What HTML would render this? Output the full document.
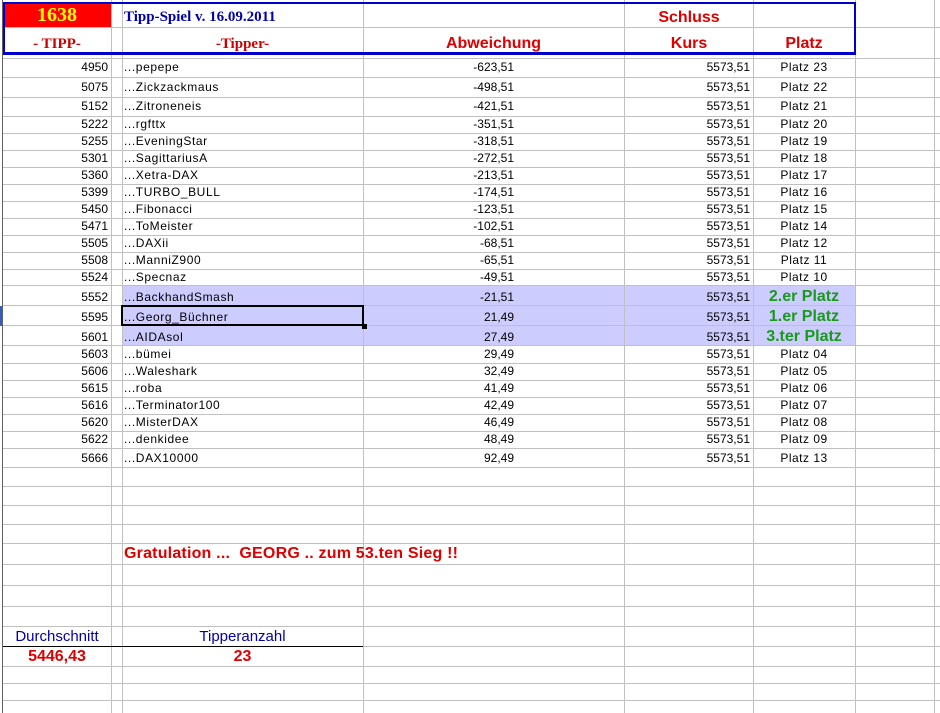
<!DOCTYPE html>
<html><head><meta charset="utf-8"><style>
body{margin:0;width:940px;height:713px;overflow:hidden;background:#fff;position:relative;font-family:"Liberation Sans",Arial,sans-serif;font-size:12px;color:#000}
.h{position:absolute;left:3px;right:0;height:1px;background:#c0c0c0}
.v{position:absolute;top:0;bottom:0;width:1px;background:#c0c0c0}
.r{position:absolute;left:0;width:940px}
.r span{position:absolute;top:0;white-space:nowrap}
.a{right:832px;text-align:right}
.b{left:124px;letter-spacing:0.6px}
.c{right:426px}
.d{right:190px}
.e{left:753px;width:102px;text-align:center;letter-spacing:0.5px}
.hl{position:absolute;left:122px;width:733px;background:#ccccff}
.g{color:#1a9a1a;font-weight:bold;font-size:16px;letter-spacing:0}
.rd{position:absolute;color:#dd0000;font-weight:bold;font-size:16px;text-align:center}
</style></head><body>
<div class="hl" style="top:286px;height:60px"></div>
<div class="h" style="top:27px"></div>
<div class="h" style="top:58px"></div><div class="h" style="top:77px"></div><div class="h" style="top:97px"></div><div class="h" style="top:116px"></div><div class="h" style="top:133px"></div><div class="h" style="top:150px"></div><div class="h" style="top:167px"></div><div class="h" style="top:184px"></div><div class="h" style="top:201px"></div><div class="h" style="top:218px"></div><div class="h" style="top:235px"></div><div class="h" style="top:252px"></div><div class="h" style="top:269px"></div><div class="h" style="top:285px"></div><div class="h" style="top:305px"></div><div class="h" style="top:325px"></div><div class="h" style="top:345px"></div><div class="h" style="top:363px"></div><div class="h" style="top:380px"></div><div class="h" style="top:397px"></div><div class="h" style="top:414px"></div><div class="h" style="top:431px"></div><div class="h" style="top:448px"></div><div class="h" style="top:467px"></div><div class="h" style="top:486px"></div><div class="h" style="top:505px"></div><div class="h" style="top:524px"></div><div class="h" style="top:543px"></div><div class="h" style="top:564px"></div><div class="h" style="top:585px"></div><div class="h" style="top:606px"></div><div class="h" style="top:626px"></div><div class="h" style="top:646px"></div><div class="h" style="top:666px"></div><div class="h" style="top:683px"></div><div class="h" style="top:700px"></div>
<div class="v" style="left:2px;background:#606060"></div>
<div class="v" style="left:111px"></div><div class="v" style="left:122px"></div><div class="v" style="left:363px"></div><div class="v" style="left:624px"></div><div class="v" style="left:753px"></div><div class="v" style="left:855px"></div><div class="v" style="left:934px"></div>
<div style="position:absolute;left:3px;top:3px;width:108px;height:24px;background:#ff0000;color:#ffff00;font:bold 20px 'Liberation Serif',serif;text-align:center;line-height:24px">1638</div>
<div style="position:absolute;left:3px;top:2px;width:849px;height:48px;border:2px solid #0000cc;border-bottom-width:3px"></div>
<div style="position:absolute;left:124px;top:9px;color:#0000aa;font:bold 15px 'Liberation Serif',serif">Tipp-Spiel v. 16.09.2011</div>
<div style="position:absolute;left:3px;width:108px;top:36px;text-align:center;color:#cc0000;font:bold 15px 'Liberation Serif',serif">- TIPP-</div>
<div style="position:absolute;left:122px;width:241px;top:36px;text-align:center;color:#cc0000;font:bold 15px 'Liberation Serif',serif">-Tipper-</div>
<div class="rd" style="left:363px;width:261px;top:35px">Abweichung</div>
<div class="rd" style="left:625px;width:128px;top:9px">Schluss</div>
<div class="rd" style="left:625px;width:128px;top:35px">Kurs</div>
<div class="rd" style="left:753px;width:102px;top:35px">Platz</div>
<div class="r" style="top:59px;line-height:17px"><span class="a">4950</span><span class="b">...pepepe</span><span class="c">-623,51</span><span class="d">5573,51</span><span class="e">Platz 23</span></div>
<div class="r" style="top:79px;line-height:17px"><span class="a">5075</span><span class="b">...Zickzackmaus</span><span class="c">-498,51</span><span class="d">5573,51</span><span class="e">Platz 22</span></div>
<div class="r" style="top:98px;line-height:17px"><span class="a">5152</span><span class="b">...Zitroneneis</span><span class="c">-421,51</span><span class="d">5573,51</span><span class="e">Platz 21</span></div>
<div class="r" style="top:116px;line-height:17px"><span class="a">5222</span><span class="b">...rgfttx</span><span class="c">-351,51</span><span class="d">5573,51</span><span class="e">Platz 20</span></div>
<div class="r" style="top:133px;line-height:17px"><span class="a">5255</span><span class="b">...EveningStar</span><span class="c">-318,51</span><span class="d">5573,51</span><span class="e">Platz 19</span></div>
<div class="r" style="top:150px;line-height:17px"><span class="a">5301</span><span class="b">...SagittariusA</span><span class="c">-272,51</span><span class="d">5573,51</span><span class="e">Platz 18</span></div>
<div class="r" style="top:167px;line-height:17px"><span class="a">5360</span><span class="b">...Xetra-DAX</span><span class="c">-213,51</span><span class="d">5573,51</span><span class="e">Platz 17</span></div>
<div class="r" style="top:184px;line-height:17px"><span class="a">5399</span><span class="b">...TURBO_BULL</span><span class="c">-174,51</span><span class="d">5573,51</span><span class="e">Platz 16</span></div>
<div class="r" style="top:201px;line-height:17px"><span class="a">5450</span><span class="b">...Fibonacci</span><span class="c">-123,51</span><span class="d">5573,51</span><span class="e">Platz 15</span></div>
<div class="r" style="top:218px;line-height:17px"><span class="a">5471</span><span class="b">...ToMeister</span><span class="c">-102,51</span><span class="d">5573,51</span><span class="e">Platz 14</span></div>
<div class="r" style="top:235px;line-height:17px"><span class="a">5505</span><span class="b">...DAXii</span><span class="c">-68,51</span><span class="d">5573,51</span><span class="e">Platz 12</span></div>
<div class="r" style="top:252px;line-height:17px"><span class="a">5508</span><span class="b">...ManniZ900</span><span class="c">-65,51</span><span class="d">5573,51</span><span class="e">Platz 11</span></div>
<div class="r" style="top:269px;line-height:17px"><span class="a">5524</span><span class="b">...Specnaz</span><span class="c">-49,51</span><span class="d">5573,51</span><span class="e">Platz 10</span></div>
<div class="r" style="top:288px;line-height:18px"><span class="a">5552</span><span class="b">...BackhandSmash</span><span class="c">-21,51</span><span class="d">5573,51</span><span class="e g">2.er Platz</span></div>
<div class="r" style="top:308px;line-height:18px"><span class="a">5595</span><span class="b">...Georg_Büchner</span><span class="c">21,49</span><span class="d">5573,51</span><span class="e g">1.er Platz</span></div>
<div class="r" style="top:328px;line-height:18px"><span class="a">5601</span><span class="b">...AIDAsol</span><span class="c">27,49</span><span class="d">5573,51</span><span class="e g">3.ter Platz</span></div>
<div class="r" style="top:346px;line-height:17px"><span class="a">5603</span><span class="b">...bümei</span><span class="c">29,49</span><span class="d">5573,51</span><span class="e">Platz 04</span></div>
<div class="r" style="top:363px;line-height:17px"><span class="a">5606</span><span class="b">...Waleshark</span><span class="c">32,49</span><span class="d">5573,51</span><span class="e">Platz 05</span></div>
<div class="r" style="top:380px;line-height:17px"><span class="a">5615</span><span class="b">...roba</span><span class="c">41,49</span><span class="d">5573,51</span><span class="e">Platz 06</span></div>
<div class="r" style="top:397px;line-height:17px"><span class="a">5616</span><span class="b">...Terminator100</span><span class="c">42,49</span><span class="d">5573,51</span><span class="e">Platz 07</span></div>
<div class="r" style="top:414px;line-height:17px"><span class="a">5620</span><span class="b">...MisterDAX</span><span class="c">46,49</span><span class="d">5573,51</span><span class="e">Platz 08</span></div>
<div class="r" style="top:431px;line-height:17px"><span class="a">5622</span><span class="b">...denkidee</span><span class="c">48,49</span><span class="d">5573,51</span><span class="e">Platz 09</span></div>
<div class="r" style="top:450px;line-height:17px"><span class="a">5666</span><span class="b">...DAX10000</span><span class="c">92,49</span><span class="d">5573,51</span><span class="e">Platz 13</span></div>
<div style="position:absolute;left:121px;top:305px;width:239px;height:17px;border:2px solid #000"></div>
<div style="position:absolute;left:362px;top:324px;width:5px;height:5px;background:#000"></div>
<div style="position:absolute;left:0;top:306px;width:2px;height:20px;background:#3060c0"></div>
<div style="position:absolute;left:124px;top:545px;color:#dd0000;font-weight:bold;font-size:16px;white-space:nowrap;letter-spacing:0.2px">Gratulation ...&nbsp; GEORG .. zum 53.ten Sieg !!</div>
<div style="position:absolute;left:3px;width:108px;top:628px;text-align:center;color:#0000aa;font-size:15px">Durchschnitt</div>
<div style="position:absolute;left:122px;width:241px;top:628px;text-align:center;color:#0000aa;font-size:15px">Tipperanzahl</div>
<div style="position:absolute;left:3px;width:360px;top:646px;height:1px;background:#000"></div>
<div class="rd" style="left:3px;width:108px;top:648px">5446,43</div>
<div class="rd" style="left:122px;width:241px;top:648px">23</div>
</body></html>
